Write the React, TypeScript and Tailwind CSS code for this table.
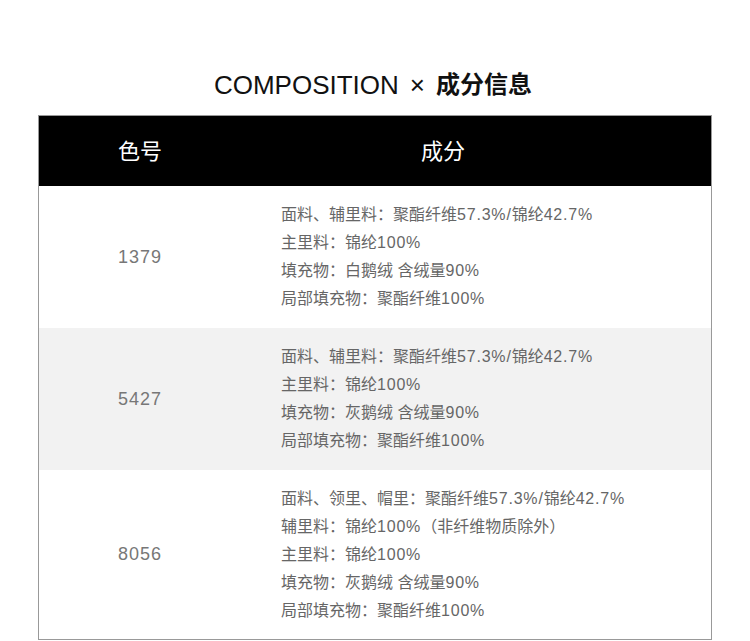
import React from "react";

const rows = [
  {
    code: "1379",
    bg: "bg-white",
    h: "h-[142px]",
    lines: [
      "面料、辅里料：聚酯纤维57.3%/锦纶42.7%",
      "主里料：锦纶100%",
      "填充物：白鹅绒 含绒量90%",
      "局部填充物：聚酯纤维100%",
    ],
  },
  {
    code: "5427",
    bg: "bg-[#f2f2f2]",
    h: "h-[142px]",
    lines: [
      "面料、辅里料：聚酯纤维57.3%/锦纶42.7%",
      "主里料：锦纶100%",
      "填充物：灰鹅绒 含绒量90%",
      "局部填充物：聚酯纤维100%",
    ],
  },
  {
    code: "8056",
    bg: "bg-white",
    h: "h-[169px]",
    lines: [
      "面料、领里、帽里：聚酯纤维57.3%/锦纶42.7%",
      "辅里料：锦纶100%（非纤维物质除外）",
      "主里料：锦纶100%",
      "填充物：灰鹅绒 含绒量90%",
      "局部填充物：聚酯纤维100%",
    ],
  },
];

function Line({ text }: { text: string }) {
  const parts = text.split(/([0-9.%/]+)/);
  return (
    <div>
      {parts.map((p, i) =>
        /^[0-9.%/]+$/.test(p) ? (
          <span key={i} className="tracking-[0.8px]">
            {p}
          </span>
        ) : (
          <span key={i}>{p}</span>
        )
      )}
    </div>
  );
}

export default function App() {
  return (
    <div
      className="w-[750px] h-[641px] bg-white overflow-hidden"
      style={{ fontFamily: '"Liberation Sans", "Noto Sans CJK SC", sans-serif' }}
    >
      <div className="pt-[70px] h-[115px] flex justify-center items-start">
        <div className="flex items-center h-[30px] text-[#111] pr-[4px]">
          <span className="text-[26px] font-light">COMPOSITION</span>
          <span className="text-[26px] font-light ml-[11px] mr-[11px]">×</span>
          <span className="text-[24px] font-bold">成分信息</span>
        </div>
      </div>
      <div className="ml-[38px] w-[674px] border border-[#999]">
        <div className="flex h-[70px] bg-black text-white text-[22px]">
          <div className="w-[202px] flex items-center justify-center">色号</div>
          <div className="flex-1 flex items-center pl-[180px]">成分</div>
        </div>
        {rows.map((r) => (
          <div key={r.code} className={`flex ${r.bg} ${r.h}`}>
            <div className="w-[202px] flex items-center justify-center text-[18px] tracking-[1px] text-[#777]">
              {r.code}
            </div>
            <div className="flex-1 flex flex-col justify-center pl-[40px] text-[16px] leading-[28px] text-[#666]">
              {r.lines.map((l, i) => (
                <Line key={i} text={l} />
              ))}
            </div>
          </div>
        ))}
      </div>
    </div>
  );
}
